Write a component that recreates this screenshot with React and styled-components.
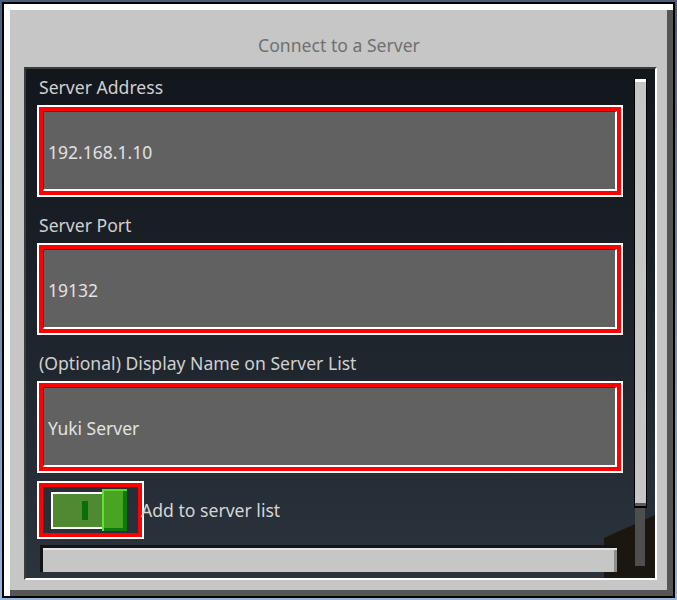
import React from "react";
import styled, { createGlobalStyle } from "styled-components";

const GlobalStyle = createGlobalStyle`
  html, body {
    margin: 0;
    padding: 0;
  }
  body {
    width: 677px;
    height: 600px;
    overflow: hidden;
    background: linear-gradient(to bottom, #4a5c7c, #93b4dc);
    font-family: "Noto Sans", "Open Sans", sans-serif;
  }
`;

const Window = styled.div`
  box-sizing: border-box;
  width: 673px;
  height: 596px;
  margin: 2px;
  border: 2px solid #000;
  background: #c6c6c6;
  box-shadow: inset 6px 6px 0 #ffffff, inset -6px -6px 0 #555555;
  padding: 0 16px 16px 20px;
  display: flex;
  flex-direction: column;
`;

const Header = styled.div`
  box-sizing: border-box;
  height: 63px;
  flex: none;
  display: flex;
  align-items: flex-end;
  justify-content: center;
  padding: 0 3px 11px 0;
  color: #707070;
  font-size: 17.6px;
  line-height: 22px;
`;

const Viewport = styled.div`
  position: relative;
  flex: 1;
  min-height: 0;
  display: flex;
  padding-bottom: 6px;
  border-top: 2px solid #3b3b3b;
  border-left: 2px solid #3b3b3b;
  border-right: 2px solid #ffffff;
  border-bottom: 2px solid #ffffff;
  background: linear-gradient(to bottom, #12161d 0%, #1c2229 45%, #2b333d 100%);

  &::before {
    content: "";
    position: absolute;
    right: 0;
    bottom: 0;
    width: 51px;
    height: 63px;
    background: #1c1611;
    clip-path: polygon(0 23px, 100% 0, 100% 100%, 0 100%);
  }
`;

const Content = styled.div`
  position: relative;
  flex: 1;
  min-width: 0;
  overflow: hidden;
  padding: 8px 0 0 11px;
`;

const Label = styled.div`
  color: #d0d0d0;
  font-size: 17.6px;
  line-height: 20px;
  margin: ${(p) => (p.$first ? "0" : "18px")} 0 8px 2px;
`;

const FocusRing = styled.div`
  box-sizing: border-box;
  width: ${(p) => p.$w || "586px"};
  height: ${(p) => p.$h || "92px"};
  border: 2px solid #ffffff;
  box-shadow: inset 0 0 0 4px #ff0000;
  padding: 4px;
`;

const Field = styled.div`
  box-sizing: border-box;
  height: 100%;
  display: flex;
  align-items: center;
  padding: 3px 0 0 4px;
  background: #616161;
  border-top: 1px solid #2e2e2e;
  border-left: 1px solid #2e2e2e;
  border-right: 2px solid #ffffff;
  border-bottom: 2px solid #ffffff;
  color: #e2e2e2;
  font-size: 17.5px;
`;

const ToggleRow = styled.div`
  display: flex;
  align-items: center;
  margin-top: 8px;
`;

const ToggleFrame = styled(FocusRing)`
  display: flex;
  align-items: center;
  padding: 4px 4px 4px 12px;
`;

const Track = styled.div`
  box-sizing: border-box;
  width: 51px;
  height: 37px;
  border: 2px solid #ffffff;
  border-right: none;
  background: #4f8a33;
  display: flex;
  align-items: center;
  justify-content: flex-end;
  padding-right: 14px;
`;

const Pip = styled.div`
  width: 6px;
  height: 19px;
  background: #0b6d0b;
`;

const Knob = styled.div`
  box-sizing: border-box;
  width: 25px;
  height: 42px;
  background: #49a421;
  border-left: 2px solid #5fe22b;
  border-top: 2px solid #5fd62a;
  box-shadow: inset -4px -3px 0 #0c7a0c;
`;

const ToggleLabel = styled.span`
  color: #d6d6d6;
  font-size: 17.6px;
  line-height: 20px;
  margin-left: -3px;
`;

const Button = styled.div`
  box-sizing: border-box;
  width: 577px;
  height: 40px;
  margin: 6px 0 0 3px;
  background: #c6c6c6;
  border-top: 3px solid #141414;
  border-left: 3px solid #141414;
  box-shadow: inset 0 2px 0 #e4e4e4, inset -3px 0 0 #8e8e8e;
`;

const Scrollbar = styled.div`
  position: relative;
  flex: none;
  width: 13px;
  margin: 10px 8px 0 10px;
  display: flex;
  flex-direction: column;
`;

const Thumb = styled.div`
  box-sizing: border-box;
  height: 429px;
  border: 1px solid #000;
  border-top: none;
  border-bottom-width: 2px;
  background: #c6c6c6;
  box-shadow: inset 0 3px 0 #ffffff, inset 0 -3px 0 #5a5a5a;
`;

const ScrollTrack = styled.div`
  height: 58px;
  margin: 0 2px 0 1px;
  background: #4e4e4e;
`;

const fields = [
  { label: "Server Address", value: "192.168.1.10" },
  { label: "Server Port", value: "19132" },
  { label: "(Optional) Display Name on Server List", value: "Yuki Server" },
];

export default function App() {
  return (
    <>
      <GlobalStyle />
      <Window>
        <Header>Connect to a Server</Header>
        <Viewport>
          <Content>
            {fields.map((f, i) => (
              <div key={f.label}>
                <Label $first={i === 0}>{f.label}</Label>
                <FocusRing>
                  <Field>{f.value}</Field>
                </FocusRing>
              </div>
            ))}
            <ToggleRow>
              <ToggleFrame $w="107px" $h="58px">
                <Track>
                  <Pip />
                </Track>
                <Knob />
              </ToggleFrame>
              <ToggleLabel>Add to server list</ToggleLabel>
            </ToggleRow>
            <Button />
          </Content>
          <Scrollbar>
            <Thumb />
            <ScrollTrack />
          </Scrollbar>
        </Viewport>
      </Window>
    </>
  );
}
